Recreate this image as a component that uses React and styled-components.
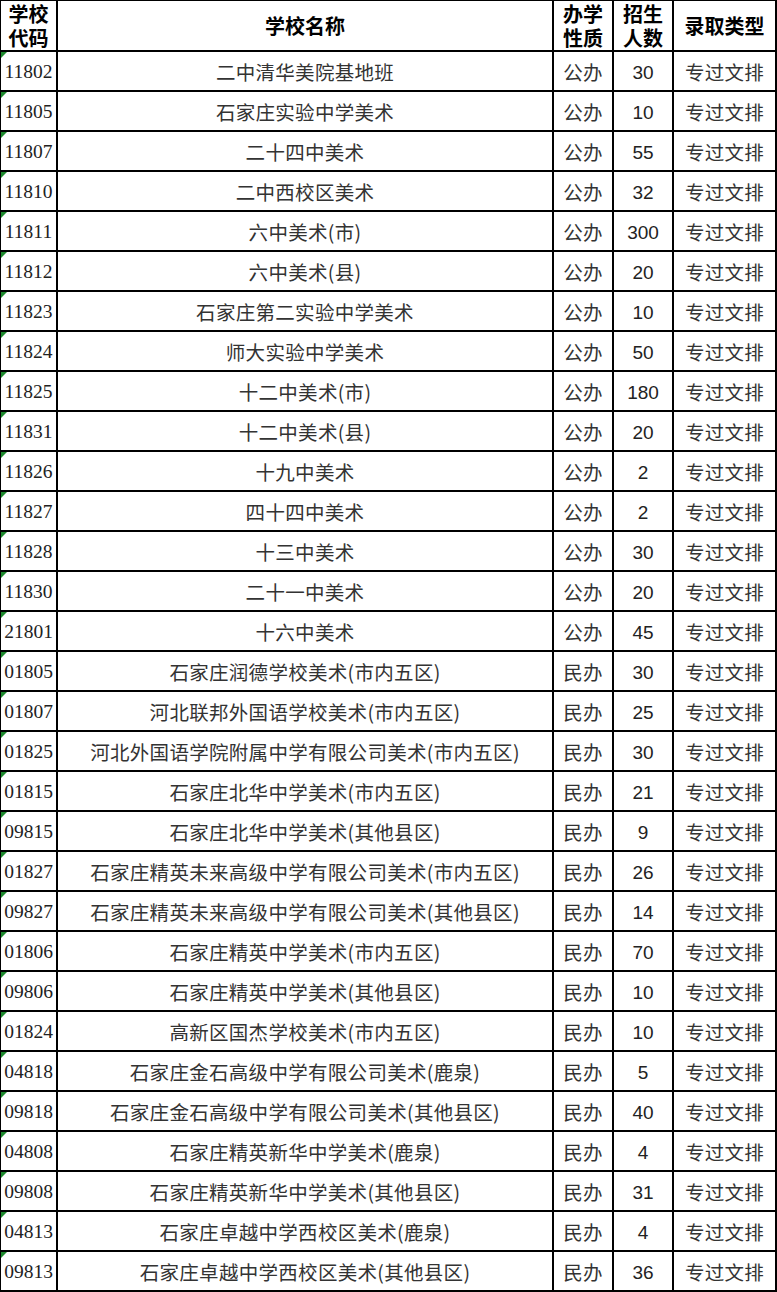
import React from 'react';
import styled, { createGlobalStyle } from 'styled-components';

const GlobalStyle = createGlobalStyle`
  html, body {
    margin: 0;
    padding: 0;
    background: #ffffff;
  }
`;

const rows = [
  ['11802', '二中清华美院基地班', '公办', '30'],
  ['11805', '石家庄实验中学美术', '公办', '10'],
  ['11807', '二十四中美术', '公办', '55'],
  ['11810', '二中西校区美术', '公办', '32'],
  ['11811', '六中美术(市)', '公办', '300'],
  ['11812', '六中美术(县)', '公办', '20'],
  ['11823', '石家庄第二实验中学美术', '公办', '10'],
  ['11824', '师大实验中学美术', '公办', '50'],
  ['11825', '十二中美术(市)', '公办', '180'],
  ['11831', '十二中美术(县)', '公办', '20'],
  ['11826', '十九中美术', '公办', '2'],
  ['11827', '四十四中美术', '公办', '2'],
  ['11828', '十三中美术', '公办', '30'],
  ['11830', '二十一中美术', '公办', '20'],
  ['21801', '十六中美术', '公办', '45'],
  ['01805', '石家庄润德学校美术(市内五区)', '民办', '30'],
  ['01807', '河北联邦外国语学校美术(市内五区)', '民办', '25'],
  ['01825', '河北外国语学院附属中学有限公司美术(市内五区)', '民办', '30'],
  ['01815', '石家庄北华中学美术(市内五区)', '民办', '21'],
  ['09815', '石家庄北华中学美术(其他县区)', '民办', '9'],
  ['01827', '石家庄精英未来高级中学有限公司美术(市内五区)', '民办', '26'],
  ['09827', '石家庄精英未来高级中学有限公司美术(其他县区)', '民办', '14'],
  ['01806', '石家庄精英中学美术(市内五区)', '民办', '70'],
  ['09806', '石家庄精英中学美术(其他县区)', '民办', '10'],
  ['01824', '高新区国杰学校美术(市内五区)', '民办', '10'],
  ['04818', '石家庄金石高级中学有限公司美术(鹿泉)', '民办', '5'],
  ['09818', '石家庄金石高级中学有限公司美术(其他县区)', '民办', '40'],
  ['04808', '石家庄精英新华中学美术(鹿泉)', '民办', '4'],
  ['09808', '石家庄精英新华中学美术(其他县区)', '民办', '31'],
  ['04813', '石家庄卓越中学西校区美术(鹿泉)', '民办', '4'],
  ['09813', '石家庄卓越中学西校区美术(其他县区)', '民办', '36'],
];

// Sheet grid: left/top hairline, each cell draws its own right/bottom rule
const Sheet = styled.div`
  display: grid;
  grid-template-columns: 57px 496px 60px 60px 103px;
  grid-auto-rows: 40px;
  grid-template-rows: 51px;
  width: 777px;
  box-sizing: border-box;
  border-left: 1px solid #000;
  border-top: 1px solid #000;
`;

const Cell = styled.div`
  position: relative;
  box-sizing: border-box;
  display: flex;
  align-items: center;
  justify-content: center;
  text-align: center;
  border-right: 2px solid #000;
  border-bottom: 2px solid #000;
  white-space: nowrap;
  overflow: hidden;
`;

const HeadCell = styled(Cell)`
  font-family: "Noto Sans CJK SC", "Liberation Sans", sans-serif;
  font-weight: 700;
  font-size: 20px;
  line-height: 24px;
  color: #000;
  white-space: normal;
  overflow: visible;
`;

const CodeCell = styled(Cell)`
  font-family: "Liberation Serif", "Noto Sans CJK SC", serif;
  font-size: 19.5px;
  color: #222;
  padding-top: 2px;

  /* Excel "number stored as text" marker */
  &::before {
    content: '';
    position: absolute;
    top: 0;
    left: 0;
    border-top: 6px solid #1e8a2e;
    border-right: 6px solid transparent;
  }
`;

const TextCell = styled(Cell)`
  font-family: "Noto Sans CJK SC", sans-serif;
  font-weight: 400;
  font-size: 19.5px;
  color: #333;
  letter-spacing: 0.3px;
`;

const NumCell = styled(Cell)`
  font-family: "Liberation Sans", Arial, sans-serif;
  font-size: 19px;
  color: #222;
  padding-top: 3px;
`;

const App = () => (
  <>
    <GlobalStyle />
    <Sheet>
      <HeadCell>学校<br />代码</HeadCell>
      <HeadCell>学校名称</HeadCell>
      <HeadCell>办学<br />性质</HeadCell>
      <HeadCell>招生<br />人数</HeadCell>
      <HeadCell>录取类型</HeadCell>
      {rows.map(([code, name, kind, count]) => (
        <React.Fragment key={code}>
          <CodeCell>{code}</CodeCell>
          <TextCell>{name}</TextCell>
          <TextCell>{kind}</TextCell>
          <NumCell>{count}</NumCell>
          <TextCell>专过文排</TextCell>
        </React.Fragment>
      ))}
    </Sheet>
  </>
);

export default App;
